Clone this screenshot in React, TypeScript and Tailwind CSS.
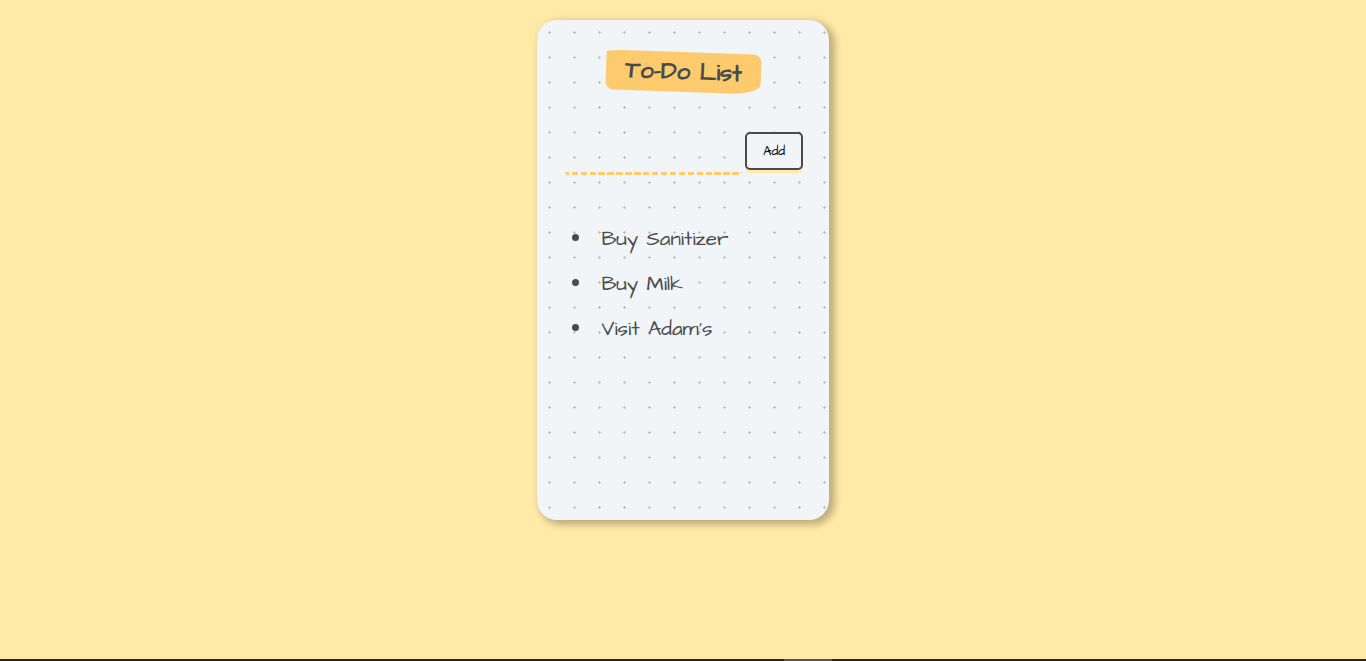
const items = ["Buy Sanitizer", "Buy Milk", "Visit Adam's"];

export default function App() {
  return (
    <div className="flex h-[661px] flex-col bg-[#ffeaa7] font-['Architects_Daughter','Lato',sans-serif] text-[#494a4b]">
      <main className="flex flex-1 items-start justify-center pt-5">
        <section className="flex h-[500px] w-[292px] flex-col rounded-[20px] bg-[#f1f5f8] bg-[radial-gradient(#bfc0c1_7.2%,transparent_0)] bg-[length:25px_25px] px-[26px] pt-8 shadow-[4px_3px_7px_2px_#00000040]">
          <div className="flex h-10 items-start justify-center">
            <h1 className="flex h-[39.5px] w-[155px] rotate-2 items-center justify-center bg-[#fdcb6e] pt-px text-2xl font-bold whitespace-nowrap [border-radius:20%_5%_20%_5%/5%_20%_25%_20%]">
              To-Do List
            </h1>
          </div>
          <form className="mt-10 flex h-[43px] items-start pl-0.5" onSubmit={(e) => e.preventDefault()}>
            <input
              aria-label="New item"
              className="mr-[2px] h-[43px] w-[178px] rounded-bl-[2px] rounded-br-[5px] border-0 bg-[repeating-linear-gradient(90deg,#fdcb6e_0_6.4px,transparent_6.4px_8.92px)] bg-[length:190px_3px] bg-[position:-2.2px_100%] bg-no-repeat px-1 outline-none"
            />
            <button className="flex h-[38px] w-[58px] shrink-0 items-center justify-center rounded-[5px] border-2 border-[#494a4b] bg-[#f1f5f8] pt-0.5 text-[13.333px] text-black shadow-[0_3px_0_#ffeaa7]">
              Add
            </button>
          </form>
          <ul className="mt-10 flex flex-col pl-[9px] text-[20.8px] leading-[45px]">
            {items.map((item) => (
              <li key={item} className="flex h-[45px] items-center">
                <span className="mr-[22.4px] size-[7px] rounded-full bg-[#494a4b]" />
                <span className="pt-0.5 whitespace-nowrap">{item}</span>
              </li>
            ))}
          </ul>
        </section>
      </main>
      <footer className="flex h-0.5 bg-[#222222]">
        <span className="ml-[784px] h-0.5 w-12 bg-[#555555]" />
      </footer>
    </div>
  );
}
